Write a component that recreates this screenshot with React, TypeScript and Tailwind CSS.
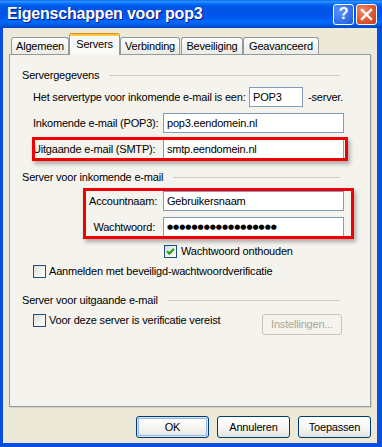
import React from "react";

function Checkbox({ checked }: { checked?: boolean }) {
  return (
    <span className="flex h-[13px] w-[13px] shrink-0 items-center justify-center border border-[#1C5180] bg-[linear-gradient(135deg,#DCDCD7_0%,#F4F4F0_60%,#FFFFFF_100%)]">
      {checked && (
        <svg width="9" height="9" viewBox="0 0 9 9">
          <path d="M1 4.2 L3.4 6.6 L8 1.8" stroke="#21A121" strokeWidth="2.2" fill="none" />
        </svg>
      )}
    </span>
  );
}

function GroupHeader({ title }: { title: string }) {
  return (
    <div className="flex h-[13px] w-[318px] items-center">
      <span className="leading-[13px]">{title}</span>
      <span className="ml-[10px] h-px flex-1 bg-[#D0D0BF]" />
    </div>
  );
}

function Input({ children, className = "" }: { children?: React.ReactNode; className?: string }) {
  return (
    <div className={`flex h-[20px] shrink-0 items-center overflow-hidden border border-[#7F9DB9] bg-white pl-[3px] ${className}`}>
      {children}
    </div>
  );
}

function Tab({ label, width, selected }: { label: string; width: string; selected?: boolean }) {
  if (selected) {
    return (
      <div
        className={`relative z-10 -mb-px flex h-[22px] flex-col items-center rounded-t-[3px] border-x border-[#919B9C] bg-[#F8F8F6] ${width}`}
      >
        <div className="h-px w-full rounded-t-[3px] bg-[#E68B2C]" />
        <div className="h-[2px] w-full bg-[#FFC73C]" />
        <div className="flex flex-1 items-center pb-[3px]">{label}</div>
      </div>
    );
  }
  return (
    <div
      className={`flex h-[17px] items-center justify-center rounded-t-[3px] border border-b-0 border-[#919B9C] bg-[linear-gradient(to_bottom,#FFFFFF_0%,#F3F3EF_50%,#ECEBE6_100%)] ${width}`}
    >
      {label}
    </div>
  );
}

function Button({ label, isDefault, disabled, className = "" }: { label: string; isDefault?: boolean; disabled?: boolean; className?: string }) {
  if (disabled) {
    return (
      <div className={`flex h-[21px] shrink-0 items-center justify-center rounded-[3px] border border-[#C9C7BA] bg-[#F4F3EE] text-[#ACA899] ${className}`}>
        {label}
      </div>
    );
  }
  return (
    <div
      className={`flex h-[22px] w-[73px] items-center justify-center rounded-[3px] border border-[#003C74] bg-[linear-gradient(to_bottom,#FFFFFF_0%,#F4F4F0_60%,#E3E2DA_100%)] ${
        isDefault ? "shadow-[inset_0_0_0_1px_#CEE7FF,inset_0_0_0_2px_#98B8EA]" : ""
      } ${className}`}
    >
      {label}
    </div>
  );
}

export default function App() {
  return (
    <div className="flex h-[447px] w-[382px] flex-col overflow-hidden whitespace-nowrap font-['Liberation_Sans',Arial,sans-serif] text-[11px] tracking-[-0.2px] text-black">
      {/* Title bar */}
      <div className="flex h-[28px] shrink-0 items-center bg-[linear-gradient(to_bottom,#0058EE_0%,#3593FF_4%,#288EFF_7%,#127DFF_10%,#036FFC_14%,#0262EE_18%,#0057E5_24%,#0054E3_30%,#0055EB_56%,#005BF5_66%,#026AFE_76%,#0062EF_86%,#0052D6_92%,#0046C8_100%)] pl-[7px] pr-[5px]">
        <span className="flex-1 text-[16px] font-bold tracking-[-0.2px] text-white [text-shadow:1px_1px_#0A1883]">
          Eigenschappen voor pop3
        </span>
        <div className="flex gap-[2px]">
          <div className="flex h-[21px] w-[21px] items-center justify-center rounded-[3px] border border-white bg-[radial-gradient(circle_at_30%_30%,#5C94FA_0%,#3A76EE_50%,#2157D6_100%)] text-[16px] font-bold leading-none text-white">
            ?
          </div>
          <div className="flex h-[21px] w-[21px] items-center justify-center rounded-[3px] border border-white bg-[radial-gradient(circle_at_30%_30%,#F08A6B_0%,#E35A33_50%,#C73A14_100%)]">
            <svg width="13" height="13" viewBox="0 0 13 13">
              <path d="M2 2 L11 11 M11 2 L2 11" stroke="white" strokeWidth="2.4" strokeLinecap="square" />
            </svg>
          </div>
        </div>
      </div>

      {/* Body */}
      <div className="flex flex-1 flex-col border-b-[4px] border-l-[3px] border-r-[5px] border-[#0A4EE4] bg-[#ECE9D8] px-[6px] pt-[5px]">
        {/* Tabs */}
        <div className="flex items-end pl-[2px]">
          <Tab label="Algemeen" width="w-[58px]" />
          <Tab label="Servers" width="w-[51px]" selected />
          <Tab label="Verbinding" width="w-[60px]" />
          <div className="w-px" />
          <Tab label="Beveiliging" width="w-[62px]" />
          <Tab label="Geavanceerd" width="w-[76px]" />
        </div>

        {/* Panel */}
        <div className="flex h-[353px] flex-col border border-[#919B9C] bg-[#F4F3EE] pl-[12px] pt-[14px] shadow-[1px_1px_0_#D5D3C5]">
          <GroupHeader title="Servergegevens" />

          <div className="ml-[11px] mt-[5px] flex h-[20px] items-center">
            <span className="w-[216px] shrink-0">Het servertype voor inkomende e-mail is een:</span>
            <Input className="w-[54px]">POP3</Input>
            <span className="ml-[5px]">-server.</span>
          </div>

          <div className="ml-[11px] mt-[6px] flex h-[20px] items-center">
            <span className="w-[130px] shrink-0">Inkomende e-mail (POP3):</span>
            <Input className="w-[181px]">pop3.eendomein.nl</Input>
          </div>

          <div className="relative ml-[11px] mt-[6px] flex h-[20px] items-center">
            <span className="w-[130px] shrink-0">Uitgaande e-mail (SMTP):</span>
            <Input className="w-[181px]">smtp.eendomein.nl</Input>
            <div className="absolute left-[-1px] top-[-2px] h-[24px] w-[316px] border-[3px] border-[#F00000] shadow-[2px_3px_4px_rgba(0,0,0,0.3)]" />
          </div>

          <div className="mt-[12px]">
            <GroupHeader title="Server voor inkomende e-mail" />
          </div>

          <div className="relative ml-[11px] mt-[7px] flex flex-col gap-[6px]">
            <div className="flex h-[20px] items-center">
              <span className="w-[130px] shrink-0 pr-[6px] text-right">Accountnaam:</span>
              <Input className="w-[181px]">Gebruikersnaam</Input>
            </div>
            <div className="flex h-[20px] items-center">
              <span className="w-[130px] shrink-0 pr-[8px] text-right">Wachtwoord:</span>
              <Input className="w-[181px]">
                <span className="font-['DejaVu_Sans',sans-serif] text-[7px] tracking-[0px]">●●●●●●●●●●●●●●●●●●</span>
              </Input>
            </div>
            <div className="absolute left-[50px] top-[-3px] h-[51px] w-[271px] border-[3px] border-[#F00000] shadow-[2px_3px_4px_rgba(0,0,0,0.3)]" />
          </div>

          <div className="ml-[142px] mt-[8px] flex h-[13px] items-center gap-[4px]">
            <Checkbox checked />
            <span>Wachtwoord onthouden</span>
          </div>

          <div className="ml-[11px] mt-[7px] flex h-[13px] items-center gap-[3px]">
            <Checkbox />
            <span>Aanmelden met beveiligd-wachtwoordverificatie</span>
          </div>

          <div className="mt-[16px]">
            <GroupHeader title="Server voor uitgaande e-mail" />
          </div>

          <div className="ml-[11px] mt-[7px] flex h-[21px] items-start">
            <div className="flex h-[13px] items-center gap-[3px]">
              <Checkbox />
              <span>Voor deze server is verificatie vereist</span>
            </div>
            <div className="flex-1" />
            <Button label="Instellingen..." disabled className="mr-[28px] w-[80px]" />
          </div>
        </div>

        {/* Buttons */}
        <div className="mt-[9px] flex justify-end gap-[8px]">
          <Button label="OK" isDefault />
          <Button label="Annuleren" />
          <Button label="Toepassen" />
        </div>
      </div>
    </div>
  );
}
